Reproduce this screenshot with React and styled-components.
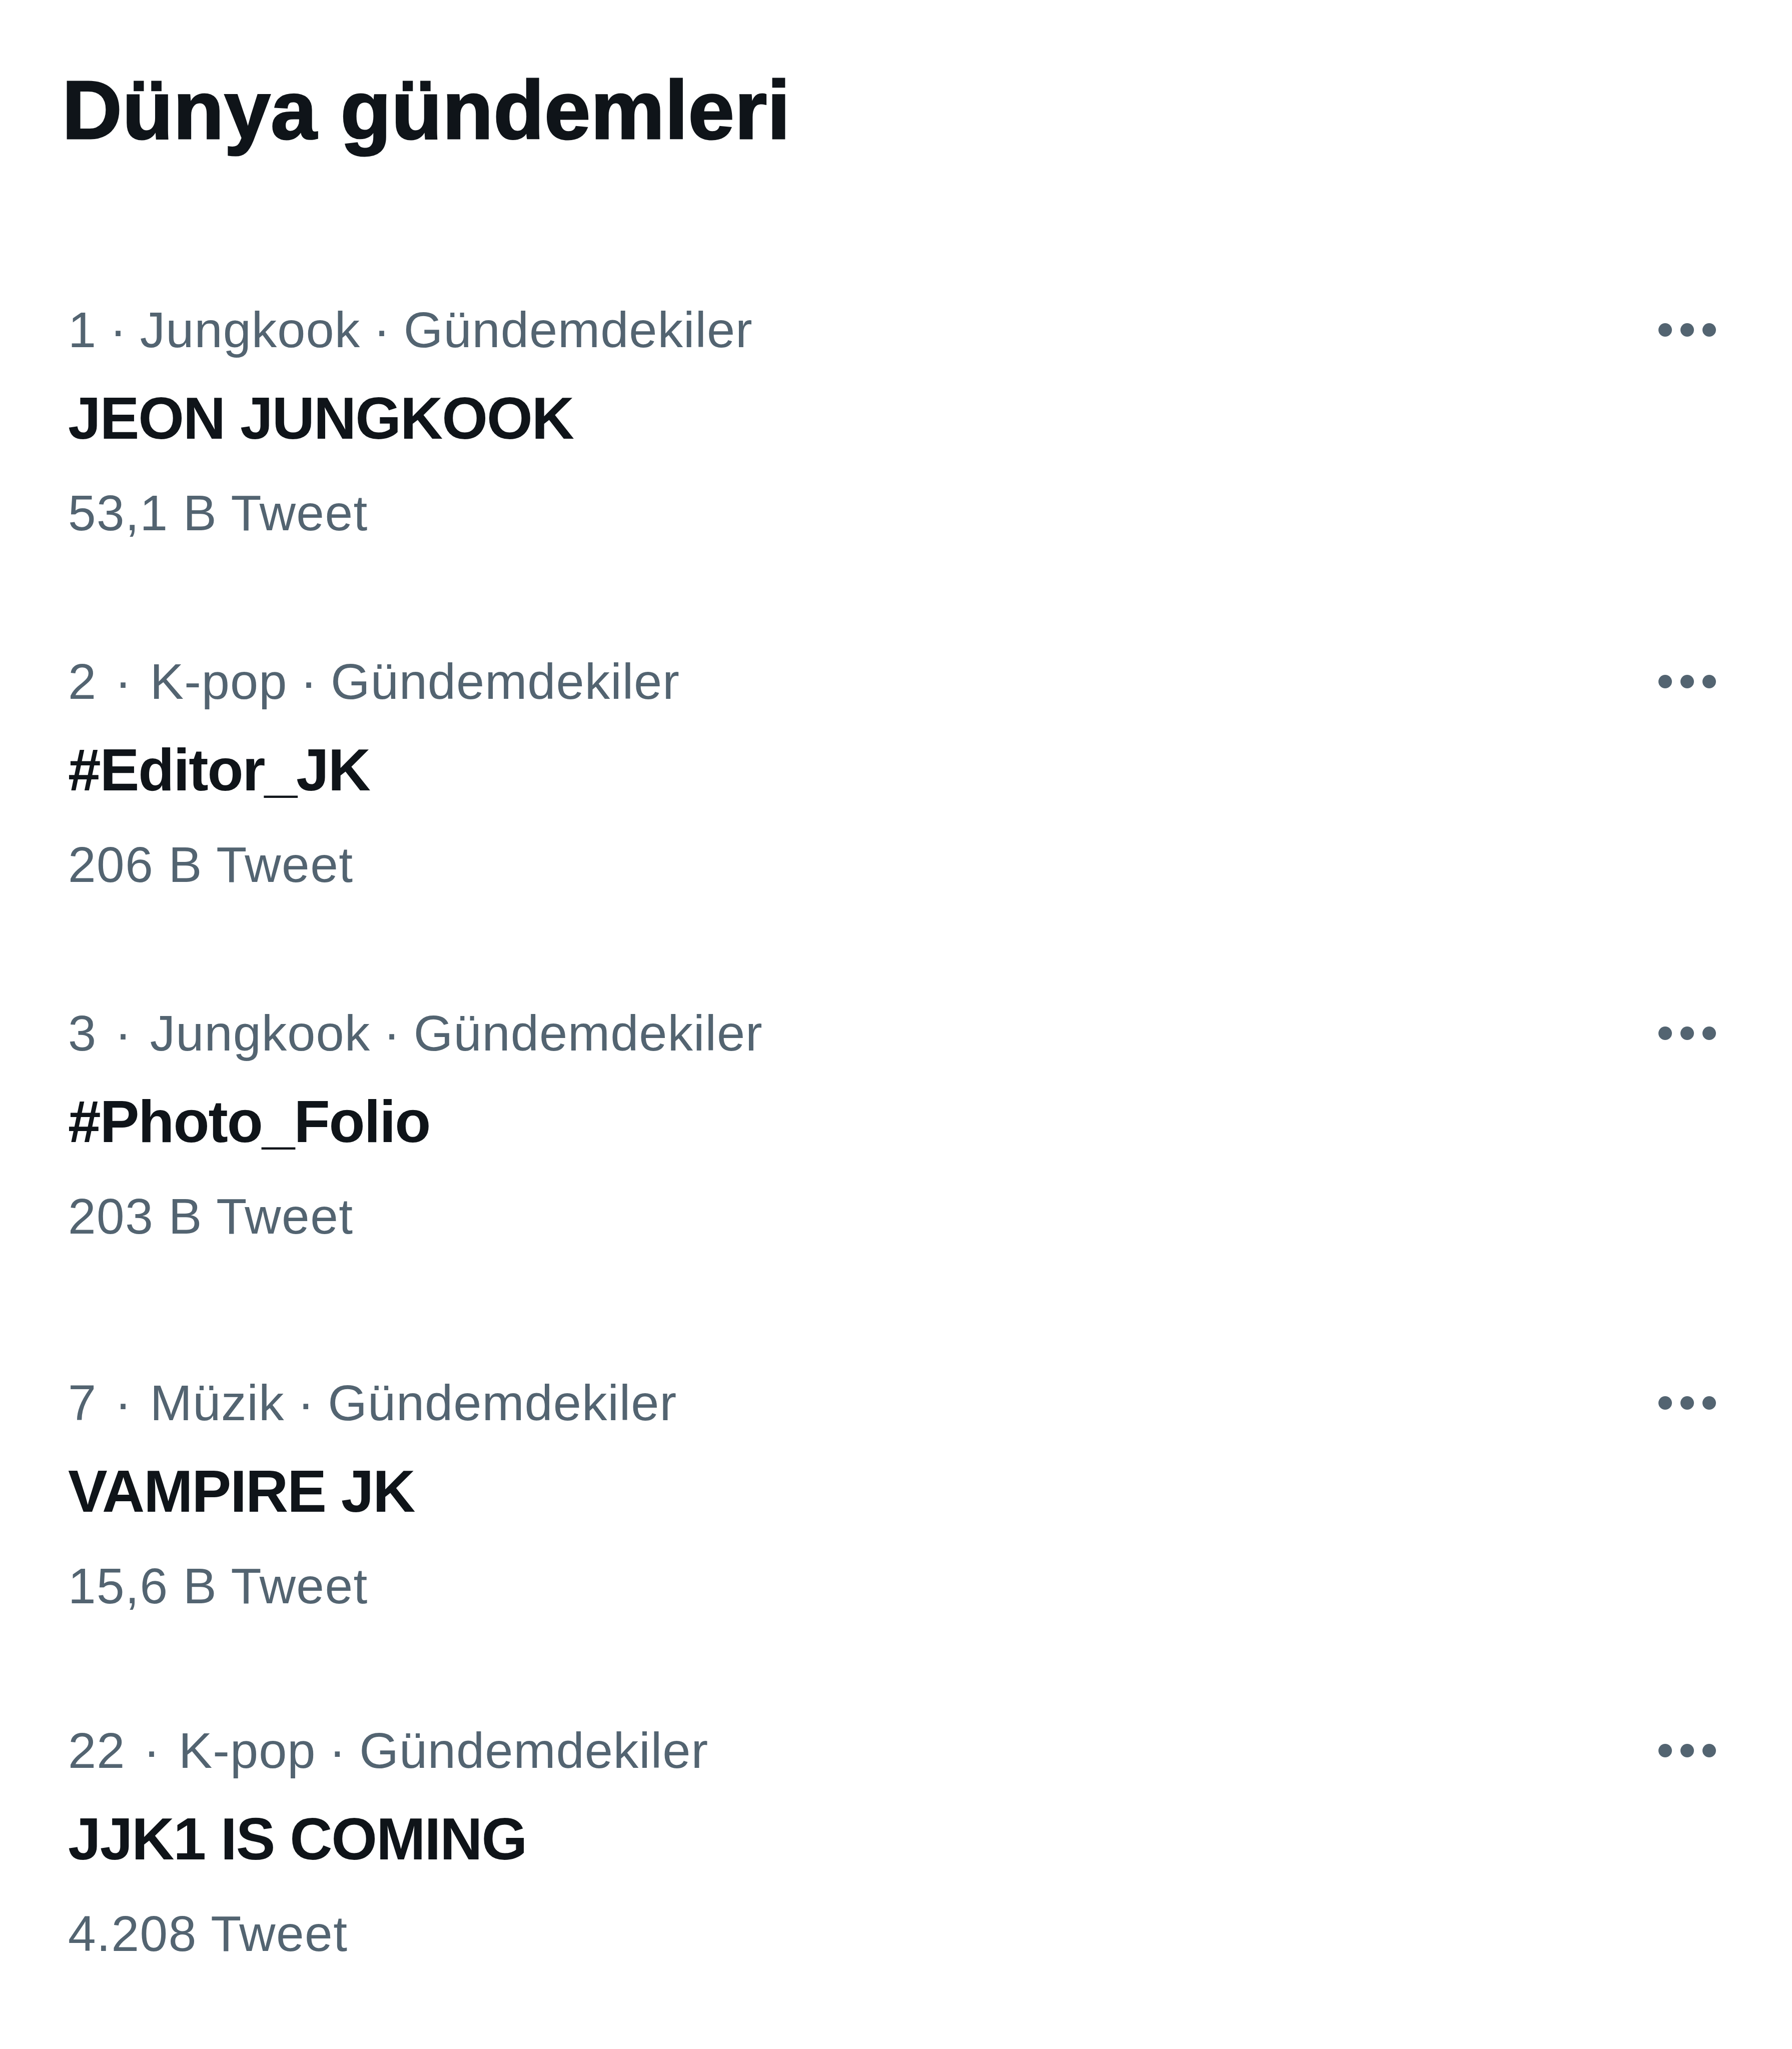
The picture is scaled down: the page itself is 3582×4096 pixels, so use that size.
import styled, { createGlobalStyle } from 'styled-components'

const GlobalStyle = createGlobalStyle`
  html, body {
    margin: 0;
    padding: 0;
    background: #ffffff;
  }
  body {
    font-family: "Liberation Sans", Arial, sans-serif;
    color: #0f1419;
  }
`

const Page = styled.div`
  width: 3582px;
  min-height: 4096px;
  box-sizing: border-box;
  padding: 120px 152px 0 136px;
  background: #ffffff;
`

const Heading = styled.h1`
  margin: 0 0 0 -12px;
  font-size: 166px;
  line-height: 200px;
  font-weight: 700;
  letter-spacing: 0.5px;
  color: #0f1419;
  -webkit-text-stroke: 3px #0f1419;
`

const TrendList = styled.div`
  display: flex;
  flex-direction: column;
  margin-top: 279px;
`

const Trend = styled.div`
  display: flex;
  flex-direction: column;
  margin-top: ${(props) => props.$gap}px;
`

const MetaRow = styled.div`
  display: flex;
  align-items: center;
  justify-content: space-between;
`

const Meta = styled.span`
  display: flex;
  align-items: baseline;
  font-size: 101px;
  line-height: 120px;
  letter-spacing: 1px;
  color: #536471;
  white-space: pre;
`

// the dot after the rank sits a little further out than the second one
const Sep = styled.span`
  margin: 0 ${(props) => (props.$wide ? 36 : 26)}px;
`

const Name = styled.div`
  margin-top: 47px;
  font-size: 118px;
  line-height: 140px;
  font-weight: 700;
  letter-spacing: -2px;
  color: #0f1419;
`

const Count = styled.div`
  margin-top: 59px;
  font-size: 100px;
  line-height: 120px;
  letter-spacing: 1.5px;
  color: #536471;
`

const MoreButton = styled.div`
  display: flex;
  align-items: center;
  gap: 17px;
`

const Dot = styled.span`
  width: 27px;
  height: 27px;
  border-radius: 50%;
  background: #536471;
`

const trends = [
  { rank: '1', category: 'Jungkook', name: 'JEON JUNGKOOK', count: '53,1 B Tweet', gap: 0 },
  { rank: '2', category: 'K-pop', name: '#Editor_JK', count: '206 B Tweet', gap: 217 },
  { rank: '3', category: 'Jungkook', name: '#Photo_Folio', count: '203 B Tweet', gap: 217 },
  { rank: '7', category: 'Müzik', name: 'VAMPIRE JK', count: '15,6 B Tweet', gap: 253 },
  { rank: '22', category: 'K-pop', name: 'JJK1 IS COMING', count: '4.208 Tweet', gap: 209 },
]

const App = () => {
  return (
    <>
      <GlobalStyle />
      <Page>
        <Heading>Dünya gündemleri</Heading>
        <TrendList>
          {trends.map((trend) => (
            <Trend key={trend.rank} $gap={trend.gap}>
              <MetaRow>
                <Meta>
                  <span>{trend.rank}</span>
                  <Sep $wide={trend.rank !== '1'}>·</Sep>
                  <span>{trend.category}</span>
                  <Sep>·</Sep>
                  <span>Gündemdekiler</span>
                </Meta>
                <MoreButton>
                  <Dot />
                  <Dot />
                  <Dot />
                </MoreButton>
              </MetaRow>
              <Name>{trend.name}</Name>
              <Count>{trend.count}</Count>
            </Trend>
          ))}
        </TrendList>
      </Page>
    </>
  )
}

export default App
